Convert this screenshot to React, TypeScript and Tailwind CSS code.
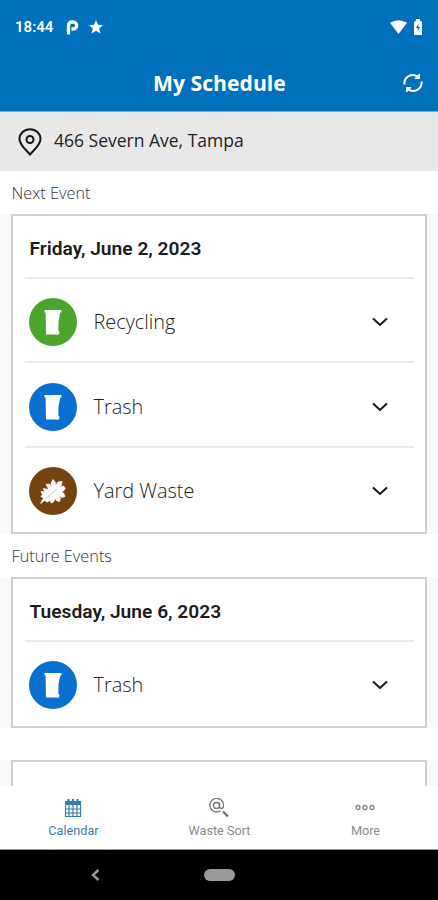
type IconProps = { kind: string };

const BinIcon = () => (
  <svg width="48" height="48" viewBox="0 0 48 48" fill="#fff">
    <path d="M15.500 12H32.500V14.500H31.300L29.400 24V32.500Q30.800 33.500 30.500 35Q30 37 28.200 37L27.400 36.400H17L16.600 14.500H15.500z" />
  </svg>
);

const LeafIcon = () => (
  <svg width="48" height="48" viewBox="0 0 48 48">
    <path
      fill="#fff"
      stroke="#fff"
      strokeWidth=".8"
      strokeLinejoin="round"
      d="M11.800 36.500L12.800 33.500L15 31.500L12 29.500L13.500 27.500L12 24.500L15.500 25L14.500 21.500L18.500 22.500L19.500 24L18.800 20.500L17 17.500L20.500 17L22.500 20L22 16.500L24 12.500L26.500 15.500L26.300 19L29 15L33 14.500L32.500 18L30.500 20.500L34.500 19L36.500 21.500L34.500 24L31 25L34.500 26L36 29.500L33 30.500L29.500 28.500L31.500 31.500L30.500 34.500L27.500 33.500L25.500 31L25 34.500L22.500 36L20.500 33.500L18.500 35L15.500 33.500L13.500 35z"
    />
    <path stroke="#c9b8a3" strokeWidth=".7" fill="none" d="M15.500 32.500L28 22" />
  </svg>
);

const ServiceIcon = ({ kind }: IconProps) => {
  if (kind === "Yard Waste") {
    return <div className="size-12 rounded-full bg-[#75430f]"><LeafIcon /></div>;
  }
  if (kind === "Recycling") {
    return <div className="size-12 rounded-full bg-[#4ba52c]"><BinIcon /></div>;
  }
  return <div className="size-12 rounded-full bg-[#0870cf]"><BinIcon /></div>;
};

function EventCard({ date, items }: { date: string; items: string[] }) {
  return (
    <div className="mx-[11px] border-2 border-[#cdd1d0] bg-white pb-[2px] pl-3 pr-[11px]">
      <h2 className="h-[60.500px] pl-[4.500px] pt-[19px] font-[Roboto] text-[19.200px] leading-[28px] font-semibold text-[#1c1c1c]">
        {date}
      </h2>
      {items.map((item) => (
        <div key={item} className="flex h-[84.500px] items-center border-t-2 border-[#e9eaea] pt-[4.500px] pl-1">
          <ServiceIcon kind={item} />
          <span className="ml-[16.500px] flex-1 text-[19.900px] font-light text-[#222]">{item}</span>
          <svg className="mr-[26px]" width="16" height="10" viewBox="0 0 16 10" fill="none" stroke="#161616" strokeWidth="2">
            <path d="M1 1.500l7 6.500 7-6.500" />
          </svg>
        </div>
      ))}
    </div>
  );
}

function StatusBar() {
  return (
    <div className="flex h-[54px] items-center px-[15px] text-white">
      <span className="w-[51px] font-[Roboto] text-[15px] font-semibold">18:44</span>
      <svg width="13" height="15" viewBox="0 0 13 15" fill="none" stroke="#fff" strokeWidth="3.300">
        <path d="M2.500 14.500V5.500Q2.500 2 6 2h1.200a3.500 3.500 0 0 1 0 7H5.500" />
      </svg>
      <svg className="ml-[10px]" width="14" height="14" viewBox="0 0 24 24" fill="#fff">
        <path d="M12 0l3.500 8.200L24 9l-6.500 5.700L19.500 23 12 18.500 4.500 23l2-8.300L0 9l8.500-.8z" />
      </svg>
      <svg className="ml-auto" width="17" height="14" viewBox="0 0 17 14" fill="#fff">
        <path d="M0 2.800Q8.500-2.300 17 2.800L8.500 14z" />
      </svg>
      <svg className="ml-[6px]" width="10" height="16" viewBox="0 0 10 16" fill="#fff">
        <path d="M3 0h4v1.500l2 1.500v13H1V3l2-1.500z" />
        <path fill="#0070bc" d="M5.300 4.500L3 9h1.700v3.500L7 8H5.300z" />
      </svg>
    </div>
  );
}

function TabBar() {
  return (
    <nav className="grid h-16 shrink-0 grid-cols-3 border-b border-[#999] bg-white pt-3 text-center font-[Roboto] text-[12.700px] text-[#8a8a8a]">
      <div className="flex flex-col items-center text-[#357fae]">
        <svg width="18" height="20" viewBox="0 0 18 20" fill="none" stroke="currentColor">
          <path fill="currentColor" stroke="none" d="M1 3h16v4H1z" />
          <path strokeWidth="2" d="M4.500 1v3M9 1v3M13.500 1v3" />
          <path strokeWidth="1.200" d="M1.500 7v11.500h15V7M1.500 11h15M1.500 15h15M5 7v11.500M9 7v11.500M13 7v11.500" />
        </svg>
        <span className="mt-[4px] pl-px leading-[18px]">Calendar</span>
      </div>
      <div className="flex flex-col items-center">
        <svg width="20" height="20" viewBox="0 0 20 20" fill="none" stroke="#777" strokeWidth="1.300">
          <path d="M11.500 12.800A6.800 6.800 0 1 1 14.500 7.500q0 3-2 3t-2-2V4.500" />
          <circle cx="7.500" cy="7.500" r="3" />
          <path strokeWidth="2.400" d="M14 13.500l5 5" />
        </svg>
        <span className="mt-[4px] pl-px leading-[18px]">Waste Sort</span>
      </div>
      <div className="flex flex-col items-center">
        <svg width="20" height="20" viewBox="0 0 20 20" fill="none" stroke="#858585" strokeWidth="1.300">
          <circle cx="3" cy="9.500" r="2" />
          <circle cx="10" cy="9.500" r="2" />
          <circle cx="17" cy="9.500" r="2" />
        </svg>
        <span className="mt-[4px] pl-px leading-[18px]">More</span>
      </div>
    </nav>
  );
}

export default function App() {
  return (
    <div className="flex h-[900px] w-[438px] flex-col overflow-hidden bg-white font-['Open_Sans',sans-serif]">
      <header className="h-28 shrink-0 border-b border-[#75a9ce] bg-[#0070bc]">
        <StatusBar />
        <div className="flex h-[58px] items-center pl-[153px] pr-[15px]">
          <h1 className="text-[21.200px] font-bold text-white">My Schedule</h1>
          <svg className="ml-auto" width="20" height="20" viewBox="0 0 20 20" fill="none" stroke="#fff" strokeWidth="2">
            <path d="M1.500 11.500A8.300 8.300 0 0 1 15 4M18.500 8.500A8.300 8.300 0 0 1 5 16" />
            <path fill="#fff" strokeWidth="1" d="M16.500 1v4.500H12zM3.500 19v-4.500H8z" />
          </svg>
        </div>
      </header>

      <div className="flex h-[59px] shrink-0 items-center bg-[#e8e8e8] pb-[2px] pl-[18px]">
        <svg className="mt-[2px]" width="24" height="28" viewBox="0 0 24 28" fill="none" stroke="#161616" strokeWidth="2">
          <path d="M12 26.500C8 22 1.500 17 1.500 11a10.500 9.800 0 0 1 21 0C22.500 17 16 22 12 26.500z" />
          <circle cx="12" cy="11.500" r="3.500" />
        </svg>
        <span className="ml-3 text-[17.500px] text-[#222]">466 Severn Ave, Tampa</span>
      </div>

      <main className="min-h-0 flex-1 overflow-hidden">
        <p className="h-[43px] pl-[11.500px] pt-[10px] text-[16.300px] leading-6 font-light text-[#333]">Next Event</p>
        <div className="bg-[#f8fafa]">
          <EventCard date="Friday, June 2, 2023" items={["Recycling", "Trash", "Yard Waste"]} />
        </div>
        <p className="h-[43px] pl-[11.500px] pt-[10px] text-[16.300px] leading-6 font-light text-[#333]">Future Events</p>
        <div className="bg-[#f8fafa]">
          <EventCard date="Tuesday, June 6, 2023" items={["Trash"]} />
        </div>
        <div className="mt-8 bg-[#f8fafa]">
          <EventCard date="" items={[]} />
        </div>
      </main>

      <TabBar />
      <div className="flex h-[50px] shrink-0 items-center bg-black">
        <svg className="ml-[91px]" width="9" height="12" viewBox="0 0 9 12" fill="none" stroke="#999" strokeWidth="2.400">
          <path d="M7.500 1L2 6l5.500 5" />
        </svg>
        <div className="ml-[104px] h-3 w-[31px] rounded-full bg-[#999]" />
      </div>
    </div>
  );
}
